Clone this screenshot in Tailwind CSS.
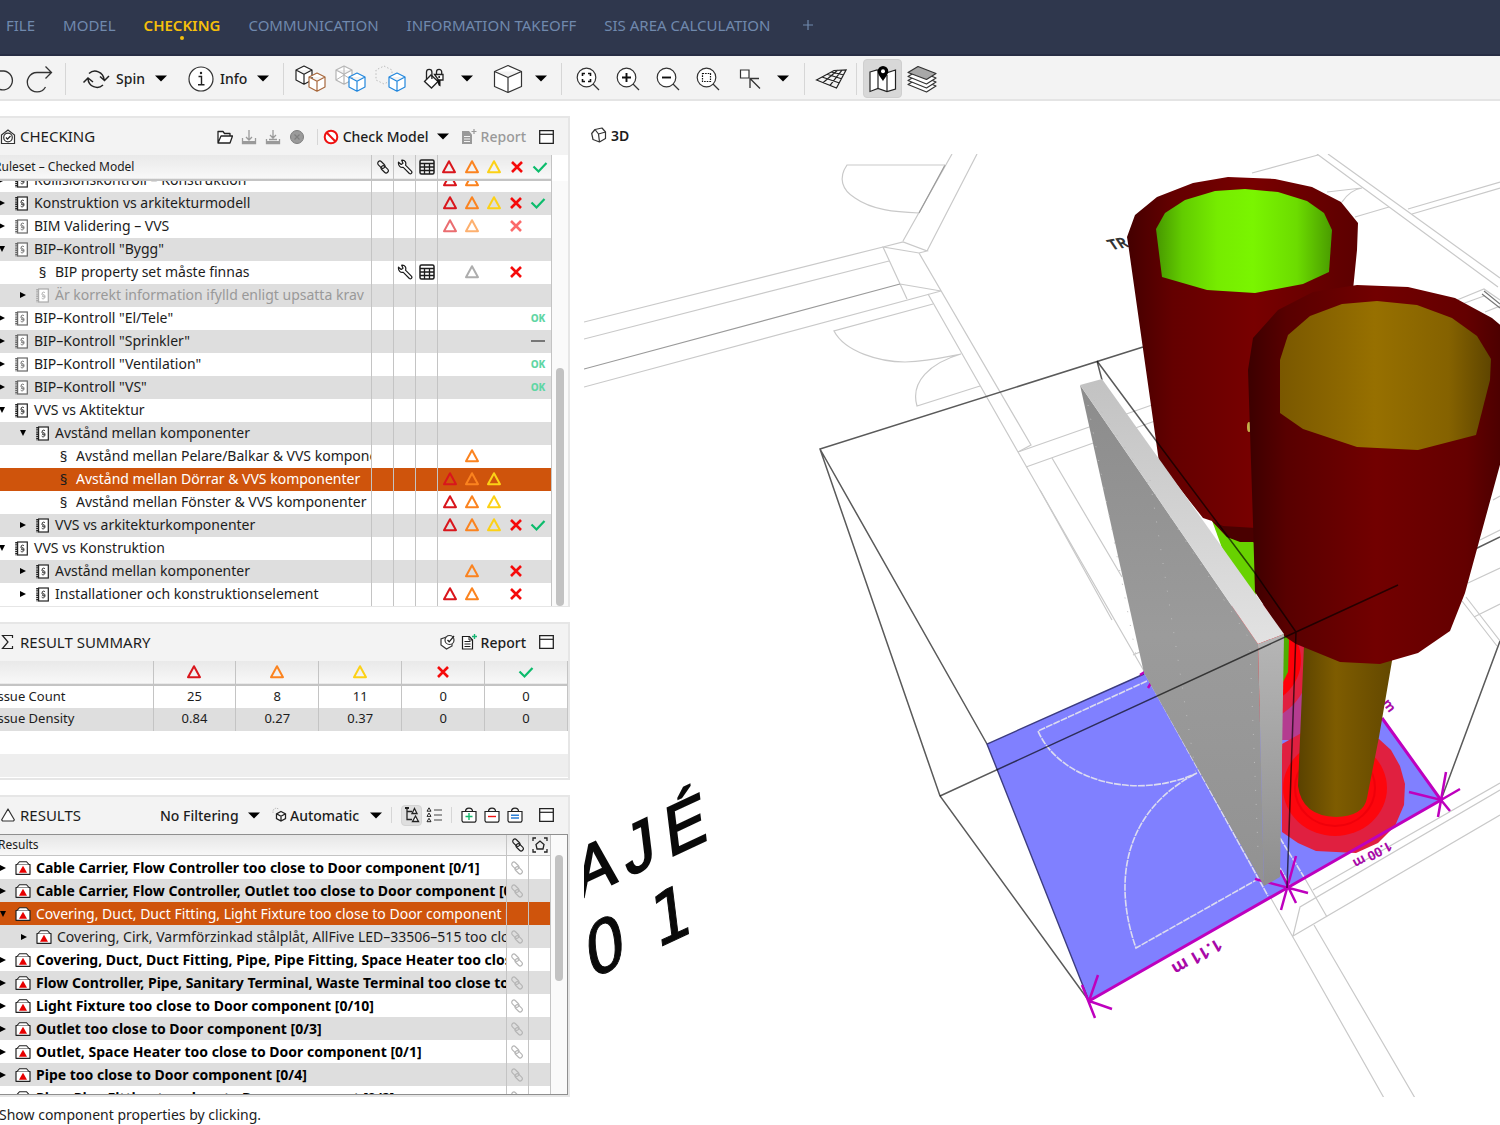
<!DOCTYPE html>
<html lang="sv">
<head>
    <meta charset="UTF-8">
    <meta name="viewport" content="width=device-width, initial-scale=1">
    <title>Checking</title>
    <script src="https://cdn.jsdelivr.net/npm/@tailwindcss/browser@4"></script>
</head>
<body class="h-screen flex flex-col overflow-hidden bg-white text-[#1c1c1c] text-[14px] font-['Noto_Sans',sans-serif]">

    <!-- Icon library -->
    <svg class="hidden" aria-hidden="true">
        <symbol id="caret" viewBox="0 0 12 7"><path d="M0 .5h12L6 6.500z" fill="#000"/></symbol>
        <symbol id="right" viewBox="0 0 6 6"><path d="M0 0l6 3-6 3z" fill="currentColor"/></symbol>
        <symbol id="down" viewBox="0 0 6 6"><path d="M0 0h6L3 6z" fill="currentColor"/></symbol>
        <symbol id="tri" viewBox="0 0 16 16"><path d="M8 2.200L14 13.200H2z" fill="none" stroke="currentColor" stroke-width="2" stroke-linejoin="round"/></symbol>
        <symbol id="cross" viewBox="0 0 16 16"><path d="M3 3l10 10M13 3L3 13" fill="none" stroke="currentColor" stroke-width="2.600"/></symbol>
        <symbol id="check" viewBox="0 0 16 16"><path d="M1.500 7.500l5 5 8-8.500" fill="none" stroke="currentColor" stroke-width="2.200"/></symbol>
        <symbol id="dash" viewBox="0 0 16 16"><path d="M1 8h14" stroke="currentColor" stroke-width="2"/></symbol>
        <symbol id="link" viewBox="0 0 16 16"><g fill="none" stroke="currentColor" stroke-width="1.300" transform="rotate(45 8 8)"><rect x="0" y="5" width="9.500" height="5" rx="2.500"/><rect x="6.500" y="6" width="9.500" height="5" rx="2.500"/></g></symbol>
        <symbol id="wrench" viewBox="0 0 16 16"><path d="M1.500 3.200L4.200 5.500 6 4.200 4.700 1.200C8 .8 9.500 3.500 8.500 6.200L14.600 12.300c1 1.500-.8 3.200-2.200 2.200L6.300 8.300C3.600 9 1 7 1.500 3.200z" fill="#fff" stroke="currentColor" stroke-width="1.200" stroke-linejoin="round"/></symbol>
        <symbol id="grid" viewBox="0 0 16 16"><rect x="1" y="1" width="14" height="14" rx="1.500" fill="none" stroke="currentColor" stroke-width="1.500"/><path d="M1 4.500h14M1 8h14M1 11.500h14M5.500 4.500V15M10.500 4.500V15" stroke="currentColor" stroke-width="1.300"/></symbol>
        <symbol id="ruleset" viewBox="0 0 13 15"><rect x="2.600" y="1" width="9.700" height="13" fill="#fff" stroke="currentColor" stroke-width="1.200"/><path d="M1.200 1v13.500" stroke="currentColor" stroke-width="2" stroke-dasharray="1.400 .8"/><path d="M9 4.800C8 3.600 6 4 6.200 5.500c.2 1.200 3 1.300 3 2.700S6.500 9 6 8M6.300 5.600c-1 1 .2 2 1.200 2.400s2 1.400.8 2.400-2.400.3-2.500-.6" fill="none" stroke="currentColor" stroke-width=".9"/></symbol>
        <symbol id="case" viewBox="0 0 16 14"><path d="M1 13.300V3.500h14v9.800z" fill="#fff" stroke="#222" stroke-width="1.200" stroke-linejoin="round"/><path d="M2 3.500L4.500.7h7L14 3.500" fill="#fff" stroke="#222" stroke-width="1.100"/><path d="M8 4.800l4 7H4z" fill="#e60000"/></symbol>
        <symbol id="window" viewBox="0 0 15 14"><path d="M.7.700h13.600v12.600H.7z" fill="#fff" stroke="#222" stroke-width="1.300"/><path d="M1 4.300h13" stroke="#222" stroke-width="1.200"/></symbol>
        <symbol id="report" viewBox="0 0 16 16"><path d="M1.500 2.500h7l3 3.500v9h-10z" fill="#fff" stroke="currentColor" stroke-width="1.200"/><path d="M8 2.500V6h3.500M3.500 7.500h6M3.500 10h6M3.500 12.500h6" fill="none" stroke="currentColor"/></symbol>
        <symbol id="cube" viewBox="0 0 20 20"><path d="M10 1l8 4v10l-8 4.200L2 15V5zM2 5l8 4.200L18 5M10 9.200v10" fill="#fff" stroke="currentColor" stroke-width="1.200" stroke-linejoin="round"/></symbol>
        <symbol id="lens" viewBox="0 0 26 26"><circle cx="11.500" cy="11.500" r="9.300" fill="#fff" stroke="#333" stroke-width="1.200"/><path d="M18 18l6 6" stroke="#333" stroke-width="1.300"/></symbol>
        <symbol id="basket" viewBox="0 0 16 16"><path d="M1 4.500h14v9.300l-1 1.400H2l-1-1.400z" fill="#fff" stroke="#222" stroke-width="1.200"/><path d="M4.500 4.500C4.500 0 11.500 0 11.500 4.500" fill="none" stroke="#222" stroke-width="1.200"/></symbol>
    </svg>

    <!-- Main menu -->
    <header class="h-14 shrink-0 bg-[#2f374d] border-b-2 border-[#272d44]">
        <nav class="flex items-center h-[50px] gap-7 pl-[6px] text-[15px] text-[#7089ad]">
            <a href="#">FILE</a>
            <a href="#">MODEL</a>
            <a href="#" class="relative font-semibold text-[#f5bf0a]">CHECKING<span class="absolute left-1/2 top-full size-1 -ml-[2px] rounded-full bg-[#f5bf0a]"></span></a>
            <a href="#">COMMUNICATION</a>
            <a href="#">INFORMATION TAKEOFF</a>
            <a href="#">SIS AREA CALCULATION</a>
            <button type="button" class="pl-1" aria-label="Add view"><svg class="size-3" viewBox="0 0 12 12"><path d="M6 1v10M1 6h10" stroke="currentColor" stroke-width="1.200"/></svg></button>
        </nav>
    </header>

    <!-- Toolbar -->
    <div class="h-[45px] shrink-0 flex items-center pt-[2px] bg-[#f3f3f3] border-b-2 border-[#e4e4e4] -ml-[21px] font-medium">
        <button type="button" class="w-10 flex justify-end" aria-label="Undo"><svg class="w-8 h-8" viewBox="0 0 32 32"><path d="M7 10h12a9.500 9.500 0 1 1-8 16" fill="none" stroke="#333" stroke-width="1.300" transform="translate(-2 -2)"/></svg></button>
        <button type="button" class="w-10 flex justify-center" aria-label="Redo"><svg class="w-8 h-8" viewBox="0 0 32 32"><path d="M28 9.500H14a9.700 9.700 0 1 0 8.500 14.500M22.500 3.500l6 6-6 6" fill="none" stroke="#333" stroke-width="1.300"/></svg></button>
        <span class="w-px h-8 ml-[6px] mr-4 bg-[#d6d6d6]"></span>
        <button type="button" class="flex items-center">
            <svg class="w-7 h-6" viewBox="0 0 28 24"><path d="M7 6.500a9 9 0 0 1 15 6M21 18a9 9 0 0 1-15-6M1.500 15.500L6 11l5 4M18 9.500l4.500 4L27 9" fill="none" stroke="#222" stroke-width="1.500"/></svg>
            <span class="ml-[6px] mr-[10px]">Spin</span><svg class="w-3 h-[7px]"><use href="#caret"/></svg>
        </button>
        <button type="button" class="flex items-center ml-[21px]">
            <svg class="size-[26px]" viewBox="0 0 26 26"><circle cx="13" cy="13" r="12" fill="#fff" stroke="#333" stroke-width="1.200"/><path d="M10.500 10.500h3v8M10 18.800h6.500" fill="none" stroke="#222" stroke-width="1.400"/><circle cx="13" cy="7" r="1.200" fill="#222"/></svg>
            <span class="ml-[6px] mr-[10px]">Info</span><svg class="w-3 h-[7px]"><use href="#caret"/></svg>
        </button>
        <span class="w-px h-8 ml-[14px] mr-[6px] bg-[#d6d6d6]"></span>
        <button type="button" class="w-10 flex justify-center" aria-label="Hide others"><svg class="w-8 h-8" viewBox="0 0 32 32"><use href="#cube" x="0" y="2" width="20" height="20" color="#222"/><use href="#cube" x="13" y="9" width="20" height="20" color="#a8683c"/></svg></button>
        <button type="button" class="w-10 flex justify-center" aria-label="Transparent"><svg class="w-8 h-8" viewBox="0 0 32 32"><use href="#cube" x="0" y="2" width="20" height="20" color="#b4b4b4"/><path d="M2 17l8-5 8 5M10 3v9" stroke="#b4b4b4" fill="none"/><use href="#cube" x="13" y="9" width="20" height="20" color="#2287dd"/></svg></button>
        <button type="button" class="w-10 flex justify-center" aria-label="Show"><svg class="w-8 h-8" viewBox="0 0 32 32"><path d="M10 3l8 4v10l-8 4-8-4V7z" fill="none" stroke="#bbb" stroke-dasharray="1.500 2"/><use href="#cube" x="13" y="9" width="20" height="20" color="#2287dd"/></svg></button>
        <button type="button" class="w-10 ml-1 flex justify-center" aria-label="Colour"><svg class="w-6 h-6" viewBox="0 0 24 24"><path d="M2.500 14.500L9 8l7 6.500-6.500 6.500z" fill="#fff" stroke="#222" stroke-width="1.300"/><path d="M4.500 12.500V5a2.700 2.700 0 0 1 5.400 0v7M14.500 7.500V5a2.600 2.600 0 0 1 5.200 0v2.500" fill="none" stroke="#222" stroke-width="1.300"/><path d="M12.500 7.500h8.500v5.500h-4.500z" fill="#fff" stroke="#222" stroke-width="1.300"/><path d="M14.500 12.500l4 .5v6.500l-1.800-1z" fill="#111"/><circle cx="17.200" cy="10" r="1" fill="#111"/></svg></button>
        <button type="button" class="w-[26px] mr-2 flex justify-center" aria-label="Colour options"><svg class="w-3 h-[7px]"><use href="#caret"/></svg></button>
        <button type="button" class="w-10 flex justify-center" aria-label="View cube"><svg class="w-[34px] h-[30px]" viewBox="0 0 34 30"><path d="M17 1.500l13.500 6v15L17 28.500 3.500 22.500v-15zM3.500 7.500L17 13.500l13.500-6M17 13.500v15" fill="#fff" stroke="#333" stroke-width="1.200" stroke-linejoin="round"/></svg></button>
        <button type="button" class="w-[26px] flex justify-center" aria-label="View options"><svg class="w-3 h-[7px]"><use href="#caret"/></svg></button>
        <span class="w-px h-8 ml-[7px] mr-[6px] bg-[#d6d6d6]"></span>
        <button type="button" class="w-10 flex justify-center" aria-label="Zoom to fit"><svg class="size-[26px]" viewBox="0 0 26 26"><use href="#lens"/><path d="M7.500 10V7.500H10M13 7.500h2.500V10M15.500 13v2.500H13M10 15.500H7.500V13" fill="none" stroke="#111" stroke-width="1.600"/></svg></button>
        <button type="button" class="w-10 flex justify-center" aria-label="Zoom in"><svg class="size-[26px]" viewBox="0 0 26 26"><use href="#lens"/><path d="M11.500 7v9M7 11.500h9" stroke="#111" stroke-width="1.900"/></svg></button>
        <button type="button" class="w-10 flex justify-center" aria-label="Zoom out"><svg class="size-[26px]" viewBox="0 0 26 26"><use href="#lens"/><path d="M7 11.500h9" stroke="#111" stroke-width="1.900"/></svg></button>
        <button type="button" class="w-10 flex justify-center" aria-label="Zoom window"><svg class="size-[26px]" viewBox="0 0 26 26"><use href="#lens"/><path d="M7.500 7.500h8v8h-8z" fill="none" stroke="#111" stroke-width="1.200" stroke-dasharray="1.600 1"/></svg></button>
        <button type="button" class="w-10 ml-[2px] flex justify-center" aria-label="Select"><svg class="size-[22px]" viewBox="0 0 22 22"><path d="M1.500 2h8.500v8H1.500z" fill="#fff" stroke="#333" stroke-width="1.200"/><path d="M11 20v-9.500h9M11 10.500l10 10" fill="none" stroke="#333" stroke-width="1.300"/></svg></button>
        <button type="button" class="w-[26px] flex justify-center" aria-label="Select options"><svg class="w-3 h-[7px]"><use href="#caret"/></svg></button>
        <span class="w-px h-8 ml-2 mr-[6px] bg-[#d6d6d6]"></span>
        <button type="button" class="w-10 flex justify-center" aria-label="Grid"><svg class="w-8 h-6" viewBox="0 0 32 24"><path d="M1.500 13L19 3.500l12-.5L21.500 21zM7 10l17.500 6M12 7.200l14.500 4.500M16 5l13 3M8 15.700L22.500 3.300M15 18.300L27 3.200" fill="none" stroke="#222" stroke-width="1.200"/></svg></button>
        <span class="w-px h-8 ml-[5px] mr-[6px] bg-[#d6d6d6]"></span>
        <button type="button" class="w-[39px] h-[39px] rounded-sm border border-[#cfcfcf] bg-[#d8d8d8] flex items-center justify-center" aria-label="Map"><svg class="w-7 h-7" viewBox="0 0 28 28"><path d="M1 7l7-2 9 3 9.500-3v19L18 26.500l-9-3-8 3z" fill="#fff" stroke="#222" stroke-width="1.200"/><path d="M9 5.500v18M18 10v16" stroke="#222" stroke-width="1.200"/><path d="M14 1a5.300 5.300 0 0 1 5.300 5.300c0 3.500-4 7-5.300 10-1.300-3-5.300-6.500-5.300-10A5.300 5.300 0 0 1 14 1z" fill="#000"/><circle cx="14" cy="6.300" r="2" fill="#fff"/></svg></button>
        <button type="button" class="w-10 flex justify-center" aria-label="Layers"><svg class="w-[30px] h-[28px]" viewBox="0 0 30 28"><g stroke="#333" stroke-width="1.200" fill="#fff" stroke-linejoin="round"><path d="M1 19.500l10-6L29 21l-9.500 6z"/><path d="M1 15.500l10-6L29 17l-9.500 6z"/><path d="M1 11.500l10-6L29 13l-9.500 6z"/><path d="M1 7.500l10-6L29 8.500l-9.500 6z" fill="#a8a8a8"/></g></svg></button>
    </div>

    <main class="flex-1 min-h-0 flex pt-[15px] gap-[14px]">

        <div class="w-[38%] shrink-0 flex flex-col gap-[15px]">

            <!-- Checking -->
            <section class="flex-[49] min-h-0 flex flex-col border-2 border-b border-l-0 border-[#e6e6e6]">
                <div class="h-[37px] shrink-0 flex items-center pr-[14px] bg-[#f3f3f3] font-medium">
                    <svg class="size-4" viewBox="0 0 16 16"><path d="M1.500 6L8 1l6.500 5v8.500h-13z" fill="#fff" stroke="#333" stroke-width="1.200"/><circle cx="8" cy="8.500" r="4.300" fill="#fff" stroke="#333" stroke-width="1.200"/><path d="M6 8.500l1.500 1.600L10.500 7" fill="none" stroke="#222" stroke-width="1.300"/></svg>
                    <h2 class="ml-1 text-[15px] font-normal">CHECKING</h2>
                    <div class="ml-auto flex items-center gap-2 text-[#9a9a9a]">
                        <button type="button" aria-label="Open"><svg class="size-4" viewBox="0 0 16 16"><path d="M1 14V2.500h5l1.500 2H13V7M1 14L4 7h11.500L13 14z" fill="#fff" stroke="#222" stroke-width="1.300" stroke-linejoin="round"/></svg></button>
                        <button type="button" aria-label="Save" disabled><svg class="size-4" viewBox="0 0 16 16"><path d="M8 1v10M5 8l3 3 3-3M1.500 9v5.500h13V9" fill="none" stroke="currentColor" stroke-width="1.300"/><path d="M1 12h14v3H1z" fill="currentColor"/></svg></button>
                        <button type="button" aria-label="Save as" disabled><svg class="size-4" viewBox="0 0 16 16"><path d="M8 1v8M5 6l3 3 3-3M4 10.500h8M1.500 10v4.500h13V10" fill="none" stroke="currentColor" stroke-width="1.300"/><path d="M1 12h14v3H1z" fill="currentColor"/></svg></button>
                        <button type="button" aria-label="Close" disabled><svg class="size-4" viewBox="0 0 16 16"><circle cx="8" cy="8" r="6.500" fill="currentColor" stroke="#7e7e7e"/><path d="M5.500 5.500l5 5M10.500 5.500l-5 5" stroke="#7e7e7e" stroke-width="1.200"/></svg></button>
                        <span class="w-px h-4 mx-1 bg-[#d6d6d6]"></span>
                    </div>
                    <button type="button" class="flex items-center gap-1 ml-px">
                        <svg class="size-4" viewBox="0 0 16 16"><circle cx="8" cy="8" r="6.300" fill="#fff" stroke="#ee1111" stroke-width="2"/><path d="M3.800 3.800l8.400 8.400" stroke="#ee1111" stroke-width="2"/></svg>
                        Check Model
                        <svg class="w-3 h-[7px] ml-1"><use href="#caret"/></svg>
                    </button>
                    <button type="button" class="flex items-center gap-1 ml-3 text-[#999]" disabled>
                        <svg class="size-4" viewBox="0 0 16 16"><path d="M1 2h7l3 3.500V15H1z" fill="currentColor"/><path d="M3 7.500h6M3 10h6M3 12.500h6" stroke="#f3f3f3"/><path d="M13 0v5M10.500 2.500h5" stroke="currentColor" stroke-width="1.200"/></svg>
                        Report
                    </button>
                    <button type="button" class="ml-[13px]" aria-label="Maximise"><svg class="w-[15px] h-[14px]"><use href="#window"/></svg></button>
                </div>
                <table class="table-fixed w-[552px] shrink-0 text-[12px]">
                    <thead>
                        <tr class="h-[25px] bg-linear-to-b from-[#e9e9e9] to-[#f8f8f8] border-b-2 border-[#c4c4c4]">
                            <th class="font-normal text-left border-r border-[#c4c4c4]"><div class="-ml-[6px]">Ruleset – Checked Model</div></th>
                            <th class="w-[22px] border-r border-[#c4c4c4]"><svg class="size-[14px] mx-auto"><use href="#link"/></svg></th>
                            <th class="w-[22px] border-r border-[#c4c4c4]"><svg class="size-4 mx-auto"><use href="#wrench"/></svg></th>
                            <th class="w-[22px] border-r border-[#c4c4c4]"><svg class="size-4 mx-auto"><use href="#grid"/></svg></th>
                            <th class="w-[114px] border-r border-[#c4c4c4]">
                                <div class="flex justify-around">
                                    <svg class="size-4 text-[#d9161c]"><use href="#tri"/></svg>
                                    <svg class="size-4 text-[#fb831f]"><use href="#tri"/></svg>
                                    <svg class="size-4 text-[#fcd116]"><use href="#tri"/></svg>
                                    <svg class="size-4 text-[#f50a0a]"><use href="#cross"/></svg>
                                    <svg class="size-4 text-[#0cbc6c]"><use href="#check"/></svg>
                                </div>
                            </th>
                        </tr>
                    </thead>
                </table>
                <div class="flex-1 min-h-0 flex">
                    <div class="w-[552px] h-full flex flex-col justify-end overflow-hidden">
                        <table class="table-fixed w-full shrink-0">
                            <tbody id="rules"></tbody>
                        </table>
                    </div>
                    <div class="flex-1 bg-[#fafafa] flex items-end justify-center">
                        <div class="w-2 h-[56%] rounded-full bg-[#c2c2c2]"></div>
                    </div>
                </div>
            </section>

            <!-- Result summary -->
            <section class="shrink-0 border-2 border-l-0 border-[#e6e6e6]">
                <div class="h-[37px] flex items-center pr-[14px] bg-[#f3f3f3] font-medium">
                    <svg class="size-4" viewBox="0 0 16 16"><path d="M12.500 4V1.500h-10L8 8l-5.500 6.500h10V12" fill="none" stroke="#222" stroke-width="1.200"/></svg>
                    <h2 class="ml-1 text-[15px] font-normal">RESULT SUMMARY</h2>
                    <button type="button" class="ml-auto" aria-label="Pie"><svg class="size-4" viewBox="0 0 16 16"><path d="M7.500 3L2 5v6l5.500 4 5.500-3V7" fill="#fff" stroke="#333" stroke-width="1.200"/><circle cx="10.500" cy="6" r="4.500" fill="#fff" stroke="#333" stroke-width="1.200"/><path d="M8.500 6l1.700 1.800L15 2" fill="none" stroke="#222" stroke-width="1.300"/></svg></button>
                    <button type="button" class="flex items-center gap-1 ml-[6px]">
                        <svg class="size-4" viewBox="0 0 16 16"><use href="#report"/><path d="M13.500 0v5M11 2.500h5" stroke="#16b573" stroke-width="1.400"/></svg>
                        Report
                    </button>
                    <button type="button" class="ml-[13px]" aria-label="Maximise"><svg class="w-[15px] h-[14px]"><use href="#window"/></svg></button>
                </div>
                <table class="table-fixed w-full text-center text-[13px]">
                    <thead>
                        <tr class="h-6 bg-linear-to-b from-[#e9e9e9] to-[#f8f8f8] border-b-2 border-[#c4c4c4]">
                            <th class="w-[153px] border-r border-[#c4c4c4]"></th>
                            <th class="border-r border-[#c4c4c4]"><svg class="size-4 mx-auto text-[#d9161c]"><use href="#tri"/></svg></th>
                            <th class="border-r border-[#c4c4c4]"><svg class="size-4 mx-auto text-[#fb831f]"><use href="#tri"/></svg></th>
                            <th class="border-r border-[#c4c4c4]"><svg class="size-4 mx-auto text-[#fcd116]"><use href="#tri"/></svg></th>
                            <th class="border-r border-[#c4c4c4]"><svg class="size-4 mx-auto text-[#f50a0a]"><use href="#cross"/></svg></th>
                            <th class="border-r border-[#c4c4c4]"><svg class="size-4 mx-auto text-[#0cbc6c]"><use href="#check"/></svg></th>
                        </tr>
                    </thead>
                    <tbody>
                        <tr class="h-[23px]">
                            <td class="text-left border-r border-[#c4c4c4]"><div class="-ml-[7px]">Issue Count</div></td>
                            <td class="border-r border-[#c4c4c4]">25</td>
                            <td class="border-r border-[#c4c4c4]">8</td>
                            <td class="border-r border-[#c4c4c4]">11</td>
                            <td class="border-r border-[#c4c4c4]">0</td>
                            <td class="border-r border-[#c4c4c4]">0</td>
                        </tr>
                        <tr class="h-[23px] bg-[#dedede]">
                            <td class="text-left border-r border-[#c4c4c4]"><div class="-ml-[7px]">Issue Density</div></td>
                            <td class="border-r border-[#c4c4c4]">0.84</td>
                            <td class="border-r border-[#c4c4c4]">0.27</td>
                            <td class="border-r border-[#c4c4c4]">0.37</td>
                            <td class="border-r border-[#c4c4c4]">0</td>
                            <td class="border-r border-[#c4c4c4]">0</td>
                        </tr>
                    </tbody>
                </table>
                <div class="h-[23px]"></div>
                <div class="h-[23px] mb-px bg-[#eeeeee]"></div>
            </section>

            <!-- Results -->
            <section class="flex-[30] min-h-0 flex flex-col border-2 border-l-0 border-[#e6e6e6]">
                <div class="h-[37px] shrink-0 flex items-center pr-[14px] bg-[#f3f3f3] font-medium">
                    <svg class="size-4" viewBox="0 0 16 16"><path d="M8 2l6.300 10.800L13.500 14h-11l-.8-1.200z" fill="#fff" stroke="#333" stroke-width="1.200" stroke-linejoin="round"/></svg>
                    <h2 class="ml-1 text-[15px] font-normal">RESULTS</h2>
                    <label class="ml-auto flex items-center gap-[9px]">
                        <select class="appearance-none bg-transparent" aria-label="Filtering"><option>No Filtering</option></select>
                        <svg class="w-3 h-[7px]"><use href="#caret"/></svg>
                    </label>
                    <label class="ml-3 flex items-center gap-[2px]">
                        <svg class="size-4" viewBox="0 0 16 16"><path d="M1 6V3l3-2 3 1" fill="none" stroke="#bbb" stroke-dasharray="1.500 1"/><path d="M9 4.500l4.500 2.300v4.700L9 14l-4.500-2.500V6.800zM4.500 6.800L9 9.200l4.500-2.400M9 9.200V14" fill="#fff" stroke="#222" stroke-width="1.300"/></svg>
                        <select class="appearance-none bg-transparent" aria-label="Grouping"><option>Automatic</option></select>
                        <svg class="w-3 h-[7px] ml-2"><use href="#caret"/></svg>
                    </label>
                    <span class="w-px h-4 mx-[9px] bg-[#d6d6d6]"></span>
                    <button type="button" class="size-[21px] flex items-center justify-center rounded-sm border border-[#d4d4d4] bg-[#dfdfdf]" aria-label="Tree"><svg class="size-4" viewBox="0 0 16 16"><path d="M3 1v11.500h5M3 4.500h5" fill="none" stroke="#222" stroke-width="1.300"/><path d="M10.500 1.500L13 6.500H8zM11.500 9l3 5.500h-6z" fill="#fff" stroke="#222" stroke-width="1.300"/><path d="M1 0h4v2H1z" fill="#222"/></svg></button>
                    <button type="button" class="ml-1" aria-label="List"><svg class="size-4" viewBox="0 0 16 16"><path d="M3 .8l2 3.400H1zM3 6l2 3.400H1zM3 11.300l2 3.400H1z" fill="#fff" stroke="#222"/><path d="M8 3h8M8 8h8M8 13h8" stroke="#444" stroke-width="1.200"/></svg></button>
                    <span class="w-px h-4 mx-[9px] bg-[#d6d6d6]"></span>
                    <button type="button" aria-label="Add"><svg class="size-4" viewBox="0 0 16 16"><use href="#basket"/><path d="M8 6v7M4.500 9.500h7" stroke="#12b76a" stroke-width="1.400"/></svg></button>
                    <button type="button" class="ml-[7px]" aria-label="Remove"><svg class="size-4" viewBox="0 0 16 16"><use href="#basket"/><path d="M4 9.500h8" stroke="#e11" stroke-width="1.400"/></svg></button>
                    <button type="button" class="ml-[7px]" aria-label="Set"><svg class="size-4" viewBox="0 0 16 16"><use href="#basket"/><path d="M4 8.300h8M4 11h8" stroke="#2b7fd6" stroke-width="1.600"/></svg></button>
                    <button type="button" class="ml-4" aria-label="Maximise"><svg class="w-[15px] h-[14px]"><use href="#window"/></svg></button>
                </div>
                <div class="flex-1 min-h-0 flex border border-l-0 border-[#8f8f8f]">
                    <div class="w-[551px] overflow-hidden">
                        <table class="table-fixed w-full">
                            <thead>
                                <tr class="h-[21px] text-[12px] leading-4 bg-linear-to-b from-[#e6e6e6] to-[#f8f8f8] border-b border-[#c4c4c4]">
                                    <th class="font-normal text-left border-r border-[#c4c4c4]"><div class="-ml-[2px]">Results</div></th>
                                    <th class="w-[22px] border-r border-[#c4c4c4]"><svg class="size-[14px] mx-auto"><use href="#link"/></svg></th>
                                    <th class="w-[22px] border-r border-[#c4c4c4]"><svg class="size-4 mx-auto" viewBox="0 0 16 16"><path d="M1 4V1h3M12 1h3v3M15 12v3h-3M4 15H1v-3" fill="none" stroke="#222" stroke-width="1.300"/><path d="M4 7.500L8 4l4 3.500-1 4.500H5z" fill="none" stroke="#222" stroke-width="1.300"/></svg></th>
                                </tr>
                            </thead>
                            <tbody id="results"></tbody>
                        </table>
                    </div>
                    <div class="flex-1 bg-[#fafafa] flex justify-center pt-5">
                        <div class="w-2 h-[53%] rounded-full bg-[#c2c2c2]"></div>
                    </div>
                </div>
            </section>
        </div>

        <!-- 3D view -->
        <section class="flex-1 min-w-0 flex flex-col">
            <h2 class="h-[38px] shrink-0 flex items-center gap-1 pl-[7px] font-semibold">
                <svg class="size-4" viewBox="0 0 16 16"><path d="M4 2.500L11 1l3.500 4v6.500L8.500 15 2 12.500.7 6.500zM4 2.500L7.500 7l7-2M7.500 7l1 8" fill="none" stroke="#333" stroke-width="1.200" stroke-linejoin="round"/></svg>
                3D
            </h2>
            <svg class="flex-1 min-h-0 w-full" viewBox="584 154 916 944" preserveAspectRatio="xMinYMin slice" font-family="Noto Sans, sans-serif">
                <defs>
                    <linearGradient id="gOut"><stop offset="0" stop-color="#440000"/><stop offset=".2" stop-color="#640000"/><stop offset=".55" stop-color="#780000"/><stop offset="1" stop-color="#5c0000"/></linearGradient>
                    <linearGradient id="gFront"><stop offset="0" stop-color="#3c0000"/><stop offset=".15" stop-color="#580000"/><stop offset=".5" stop-color="#720000"/><stop offset=".85" stop-color="#640000"/><stop offset="1" stop-color="#4a0000"/></linearGradient>
                    <linearGradient id="gGreen"><stop offset="0" stop-color="#479800"/><stop offset=".15" stop-color="#62cc00"/><stop offset=".35" stop-color="#76ec00"/><stop offset=".55" stop-color="#7af500"/><stop offset=".8" stop-color="#6cdc00"/><stop offset="1" stop-color="#4a9c00"/></linearGradient>
                    <linearGradient id="gBrown"><stop offset="0" stop-color="#7a5800"/><stop offset=".45" stop-color="#977000"/><stop offset=".8" stop-color="#856200"/><stop offset="1" stop-color="#5e4500"/></linearGradient>
                    <linearGradient id="gLeg"><stop offset="0" stop-color="#5a4200"/><stop offset=".4" stop-color="#7e5c00"/><stop offset="1" stop-color="#634800"/></linearGradient>
                    <linearGradient id="gTop" x2="0" y2="1"><stop offset="0" stop-color="#c2c2c2"/><stop offset="1" stop-color="#e2e2e2"/></linearGradient>
                    <linearGradient id="gFace" x2="0" y2="1"><stop offset="0" stop-color="#8c8c8c"/><stop offset=".5" stop-color="#9b9b9b"/><stop offset="1" stop-color="#929292"/></linearGradient>
                    <linearGradient id="gEdge" x2="0" y2="1"><stop offset="0" stop-color="#b6b6b6"/><stop offset="1" stop-color="#8e8e8e"/></linearGradient>
                </defs>

                <!-- floor plan -->
                <g fill="none" stroke="#c9c9c9" stroke-width="1.200">
                    <path d="M584 322L883 247 903 242 927 251 919 253 883 247 907 299M584 339L889 261M900 284L941 291 584 387M919 253L1031 445 1018 452M952 154L903 241M977 154L927 251"/>
                    <path d="M584 369L900 284M945 165L919 213" stroke="#9a9a9a"/>
                    <path d="M945 165H847C838 178 842 190 855 198 872 210 895 212 919 213"/>
                    <path d="M928 294L1018 452 1144 671M933 304L834 331C845 352 880 362 905 362 930 361 945 357 961 354 930 363 910 382 917 406L980 386"/>
                    <path d="M1018 452L1152 405M1026 467L1155 421M1040 490L1112 620M1052 458L1122 577M1133 655L1140 652"/>
                    <path d="M1252 173L1318 155M1317 154L1498 287M1328 154L1500 278M1327 192L1362 188Q1350 190 1342 202M1355 217L1389 207M1408 209L1500 182M1412 214L1500 188M1457 300L1484 289 1500 300M1462 304L1484 296M1485 312L1500 306"/>
                    <path d="M1484 291L1500 304M1482 294L1500 308" stroke="#777"/>
                    <path d="M1493 500L1500 496M1480 540L1500 530M1468 583L1500 568M1466 597L1500 641M1462 601L1497 646M1474 617L1500 604"/>
                    <path d="M1500 783L1313 890M1500 790L1300 907 1293 936 1500 815M1264 886L1384 1098M1304 877L1327 917M1314 925L1415 1098"/>
                </g>
                <g fill="#0a0a0a" stroke="#0a0a0a">
                    <text transform="translate(578 900) rotate(-25) skewX(-18)" x="0 54 100" font-size="66" stroke-width="2" font-family="Liberation Sans, sans-serif">AJÉ</text>
                    <text transform="translate(548 999) rotate(-25) skewX(-18)" x="-19 45 118" font-size="68" font-family="DejaVu Sans, sans-serif">001</text>
                </g>
                <text transform="translate(1112 250) rotate(-10) skewX(24)" font-size="15" font-weight="700" fill="#333">TR</text>

                <!-- bounding box, back -->
                <path d="M1102 380L1097 361M1143 347L820 449 940 796 1089 1001M820 449L987 744M1500 641L1441 800M1467 553L1500 537" fill="none" stroke="#5a5a5a" stroke-width="1.500"/>

                <!-- measured floor -->
                <path d="M987 744L1300 604 1441 800 1089 1001z" fill="#8080ff"/>
                <path d="M1144 674L987 744 1089 1001" fill="none" stroke="#3c3c80" stroke-width="1.400"/>
                <path d="M1147 681L1038 731C1055 770 1105 790 1153 785Q1178 782 1197 773C1125 810 1112 880 1136 948L1258 879M1144 671L1268 896M1280 838L1304 877M1280 868L1290 885" fill="none" stroke="#dcdcf0" stroke-width="1.600" stroke-dasharray="7 1"/>
                <path d="M1282 630h24v110h-24z" fill="#b43c90"/>
                <ellipse cx="1250" cy="663" rx="60" ry="60" fill="#e02040"/>
                <ellipse cx="1250" cy="660" rx="51" ry="47" fill="#ff0008"/>
                <path d="M1336 727L1358 730 1379 739 1391 750 1400 766 1405 784 1404 805 1395 826 1378 843 1356 853 1316 851 1298 843 1282 832V744L1305 731z" fill="#e02040"/>
                <ellipse cx="1335" cy="788" rx="52" ry="48" fill="#fd060d"/>
                <ellipse cx="1335" cy="788" rx="40" ry="38" fill="none" stroke="#f0000a" stroke-width="2"/>
                <g fill="none" stroke="#be00be" stroke-width="3">
                    <path d="M1089 1001L1287 888 1441 800 1382 718"/>
                    <path d="M1082 985L1095 1018M1098 975L1089 1001 1112 1009M1296 856L1281 910M1255 879L1308 893M1280 870L1296 903M1446 772L1438 817M1409 792L1441 800 1460 789M1441 800L1450 811M1140 675L1146 671M1148 688L1151 683" stroke-width="2.500"/>
                </g>
                <text transform="translate(1218 938) rotate(150)" font-size="17" font-weight="700" fill="#a808a8">1.11 m</text>
                <text transform="translate(1389 841) rotate(152)" font-size="13" font-weight="700" fill="#a808a8">1.00 m</text>
                <text transform="translate(1382 703) rotate(54)" font-size="13" font-weight="700" fill="#a808a8">m</text>

                <!-- rear pipe -->
                <path d="M1210 515H1256V600L1230 570z" fill="#68d200"/>
                <path d="M1282 632L1289 640 1288 672 1282 684z" fill="#4fae00"/>
                <path d="M1127 237L1135 215 1157 197 1193 183 1228 177 1275 179 1312 187 1341 202 1358 223 1357 250 1353 290 1280 560 1253 542 1240 541 1227 537 1212 521 1203 518 1159 462 1129 250z" fill="url(#gOut)"/>
                <path d="M1212 521L1223 526 1256 528V542H1240L1227 537z" fill="#4a0000"/>
                <path d="M1156 229L1165 213 1185 200 1215 191 1245 189 1278 192 1307 201 1324 213 1332 230 1329 272 1303 284 1255 293 1207 290 1162 277z" fill="url(#gGreen)"/>
                <ellipse cx="1249" cy="427" rx="2" ry="5" fill="#c5b04a"/>

                <!-- front pipe -->
                <path d="M1304 645L1298 786Q1302 816 1336 817 1364 816 1367 798L1379 737 1393 655z" fill="url(#gLeg)"/>
                <path d="M1248 370L1253 338 1278 310 1313 292 1357 285 1408 287 1455 298 1492 318 1504 328V450L1465 593 1450 631 1418 653 1380 664 1340 662 1296 644 1284 636 1255 592 1253 523z" fill="url(#gFront)"/>
                <path d="M1280 360L1288 335 1310 316 1342 304 1377 301 1417 305 1452 318 1477 336 1491 359 1490 380 1476 435 1418 450 1357 447 1303 429 1280 413z" fill="url(#gBrown)"/>

                <!-- door leaf -->
                <path d="M1080 385L1258 644 1264 886 1144 673z" fill="url(#gFace)"/>
                <path d="M1080 385L1102 379 1284 634 1258 644z" fill="url(#gTop)"/>
                <path d="M1258 644L1284 634 1280 877 1264 886z" fill="url(#gEdge)"/>
                <path d="M1088 405L1136 655M1094 400L1250 640M1150 480L1196 775M1250 650L1258 850" fill="none" stroke="#bdbdbd" stroke-dasharray="1 13"/>

                <!-- bounding box, front -->
                <path d="M1097 361L1157 442 1255 573 1296 632 1287 888M940 796L1296 632 1398 585" fill="none" stroke="#000" stroke-opacity=".65" stroke-width="1.500"/>
            </svg>
        </section>
    </main>

    <footer class="h-[28px] shrink-0 flex items-center pt-[6px]"><span class="-ml-px">Show component properties by clicking.</span></footer>

    <script>
        // level, arrow, icon, text, status marks, [wrench + table]
        const rules = [
            [0, 'right', 'set', 'Kollisionskontroll – Konstruktion', 'RO...'],
            [0, 'right', 'set', 'Konstruktion vs arkitekturmodell', 'ROYXC'],
            [0, 'right', 'soft', 'BIM Validering – VVS', 'ro.x.'],
            [0, 'down', 'soft', 'BIP–Kontroll "Bygg"', '.....'],
            [1, '', 'rule', 'BIP property set måste finnas', '.g.X.', true],
            [1, 'right', 'dim', 'Är korrekt information ifylld enligt upsatta krav', '.....'],
            [0, 'right', 'soft', 'BIP–Kontroll "El/Tele"', '....K'],
            [0, 'right', 'soft', 'BIP–Kontroll "Sprinkler"', '....-'],
            [0, 'right', 'soft', 'BIP–Kontroll "Ventilation"', '....K'],
            [0, 'right', 'soft', 'BIP–Kontroll "VS"', '....K'],
            [0, 'down', 'set', 'VVS vs Aktitektur', '.....'],
            [1, 'down', 'set', 'Avstånd mellan komponenter', '.....'],
            [2, '', 'rule', 'Avstånd mellan Pelare/Balkar & VVS komponenter', '.O...'],
            [2, '', 'rule', 'Avstånd mellan Dörrar & VVS komponenter', 'ROY..'],
            [2, '', 'rule', 'Avstånd mellan Fönster & VVS komponenter', 'ROY..'],
            [1, 'right', 'set', 'VVS vs arkitekturkomponenter', 'ROYXC'],
            [0, 'down', 'set', 'VVS vs Konstruktion', '.....'],
            [1, 'right', 'set', 'Avstånd mellan komponenter', '.O.X.'],
            [1, 'right', 'set', 'Installationer och konstruktionselement', 'RO.X.'],
        ];
        const selectedRule = 13;

        const results = [
            [0, 'right', 'Cable Carrier, Flow Controller too close to Door component [0/1]'],
            [0, 'right', 'Cable Carrier, Flow Controller, Outlet too close to Door component [0/2]'],
            [0, 'down', 'Covering, Duct, Duct Fitting, Light Fixture too close to Door component [0/1]'],
            [1, 'right', 'Covering, Cirk, Varmförzinkad stålplåt, AllFive LED–33506–515 too close'],
            [0, 'right', 'Covering, Duct, Duct Fitting, Pipe, Pipe Fitting, Space Heater too close to Door'],
            [0, 'right', 'Flow Controller, Pipe, Sanitary Terminal, Waste Terminal too close to Door'],
            [0, 'right', 'Light Fixture too close to Door component [0/10]'],
            [0, 'right', 'Outlet too close to Door component [0/3]'],
            [0, 'right', 'Outlet, Space Heater too close to Door component [0/1]'],
            [0, 'right', 'Pipe too close to Door component [0/4]'],
            [0, 'right', 'Pipe, Pipe Fitting too close to Door component [0/2]'],
        ];
        const selectedResult = 2;

        const marks = {
            R: '<svg class="size-4 text-[#d9161c]"><use href="#tri"/></svg>',
            O: '<svg class="size-4 text-[#fb831f]"><use href="#tri"/></svg>',
            Y: '<svg class="size-4 text-[#fcd116]"><use href="#tri"/></svg>',
            X: '<svg class="size-4 text-[#f50a0a]"><use href="#cross"/></svg>',
            C: '<svg class="size-4 text-[#0cbc6c]"><use href="#check"/></svg>',
            r: '<svg class="size-4 text-[#ea6d70]"><use href="#tri"/></svg>',
            o: '<svg class="size-4 text-[#fdb06f]"><use href="#tri"/></svg>',
            x: '<svg class="size-4 text-[#fb6a6a]"><use href="#cross"/></svg>',
            g: '<svg class="size-4 text-[#adadad]"><use href="#tri"/></svg>',
            K: '<span class="text-[10px] leading-4 font-extrabold text-[#5fd6a4]">OK</span>',
            '-': '<svg class="size-4 text-[#777]"><use href="#dash"/></svg>',
            '.': '<span></span>',
        };
        const icons = {
            set: '<svg class="w-[13px] h-[15px] shrink-0 text-[#222]"><use href="#ruleset"/></svg>',
            soft: '<svg class="w-[13px] h-[15px] shrink-0 text-[#666]"><use href="#ruleset"/></svg>',
            dim: '<svg class="w-[13px] h-[15px] shrink-0 text-[#aaa]"><use href="#ruleset"/></svg>',
            rule: '<span class="w-[13px] shrink-0 text-center text-[15px] text-[#1c1c1c]">§</span>',
        };
        const indent = ['', 'pl-[21px]', 'pl-[42px]'];
        const edge = 'border-r border-[#c4c4c4]';

        function arrow(dir) {
            if (!dir) return '<span class="w-[6px] shrink-0"></span>';
            return `<button type="button" class="w-[6px] shrink-0 text-black" aria-label="Toggle"><svg class="size-[6px]"><use href="#${dir}"/></svg></button>`;
        }

        function rowColour(i, selected) {
            if (i === selected) return 'bg-[#cf540c] text-white';
            return i % 2 ? 'bg-[#dedede]' : 'bg-white';
        }

        document.getElementById('rules').innerHTML = rules.map(([level, dir, icon, text, status, extra], i) => `
            <tr class="h-[23px] leading-[22px] ${rowColour(i, selectedRule)}">
                <td class="${edge} overflow-hidden">
                    <div class="flex items-center h-[23px] -ml-px whitespace-nowrap ${indent[level]}">
                        ${arrow(dir)}
                        <span class="flex items-center ml-[10px] gap-[6px] ${icon === 'dim' ? 'text-[#999]' : ''}">${icons[icon]}<span>${text}</span></span>
                    </div>
                </td>
                <td class="w-[22px] ${edge}"></td>
                <td class="w-[22px] ${edge}">${extra ? '<svg class="size-4 mx-auto"><use href="#wrench"/></svg>' : ''}</td>
                <td class="w-[22px] ${edge}">${extra ? '<svg class="size-4 mx-auto"><use href="#grid"/></svg>' : ''}</td>
                <td class="w-[114px] ${edge}"><div class="grid grid-cols-5 justify-items-center items-center w-[110px] ml-px">${[...status].map(s => marks[s]).join('')}</div></td>
            </tr>`).join('');

        document.getElementById('results').innerHTML = results.map(([level, dir, text], i) => `
            <tr class="h-[23px] leading-[22px] ${rowColour(i, selectedResult)}">
                <td class="${edge} overflow-hidden">
                    <div class="flex items-center h-[23px] whitespace-nowrap ${indent[level]}">
                        ${arrow(dir)}
                        <svg class="w-4 h-[14px] shrink-0 ml-[9px] mr-[5px]"><use href="#case"/></svg>
                        <span class="${level || i === selectedResult ? '' : 'font-bold text-black'}">${text}</span>
                    </div>
                </td>
                <td class="w-[22px] ${edge}">${i === selectedResult ? '' : '<svg class="size-[14px] ml-[3px] text-[#b5b5b5]"><use href="#link"/></svg>'}</td>
                <td class="w-[22px] ${edge}"></td>
            </tr>`).join('');
    </script>
</body>
</html>
